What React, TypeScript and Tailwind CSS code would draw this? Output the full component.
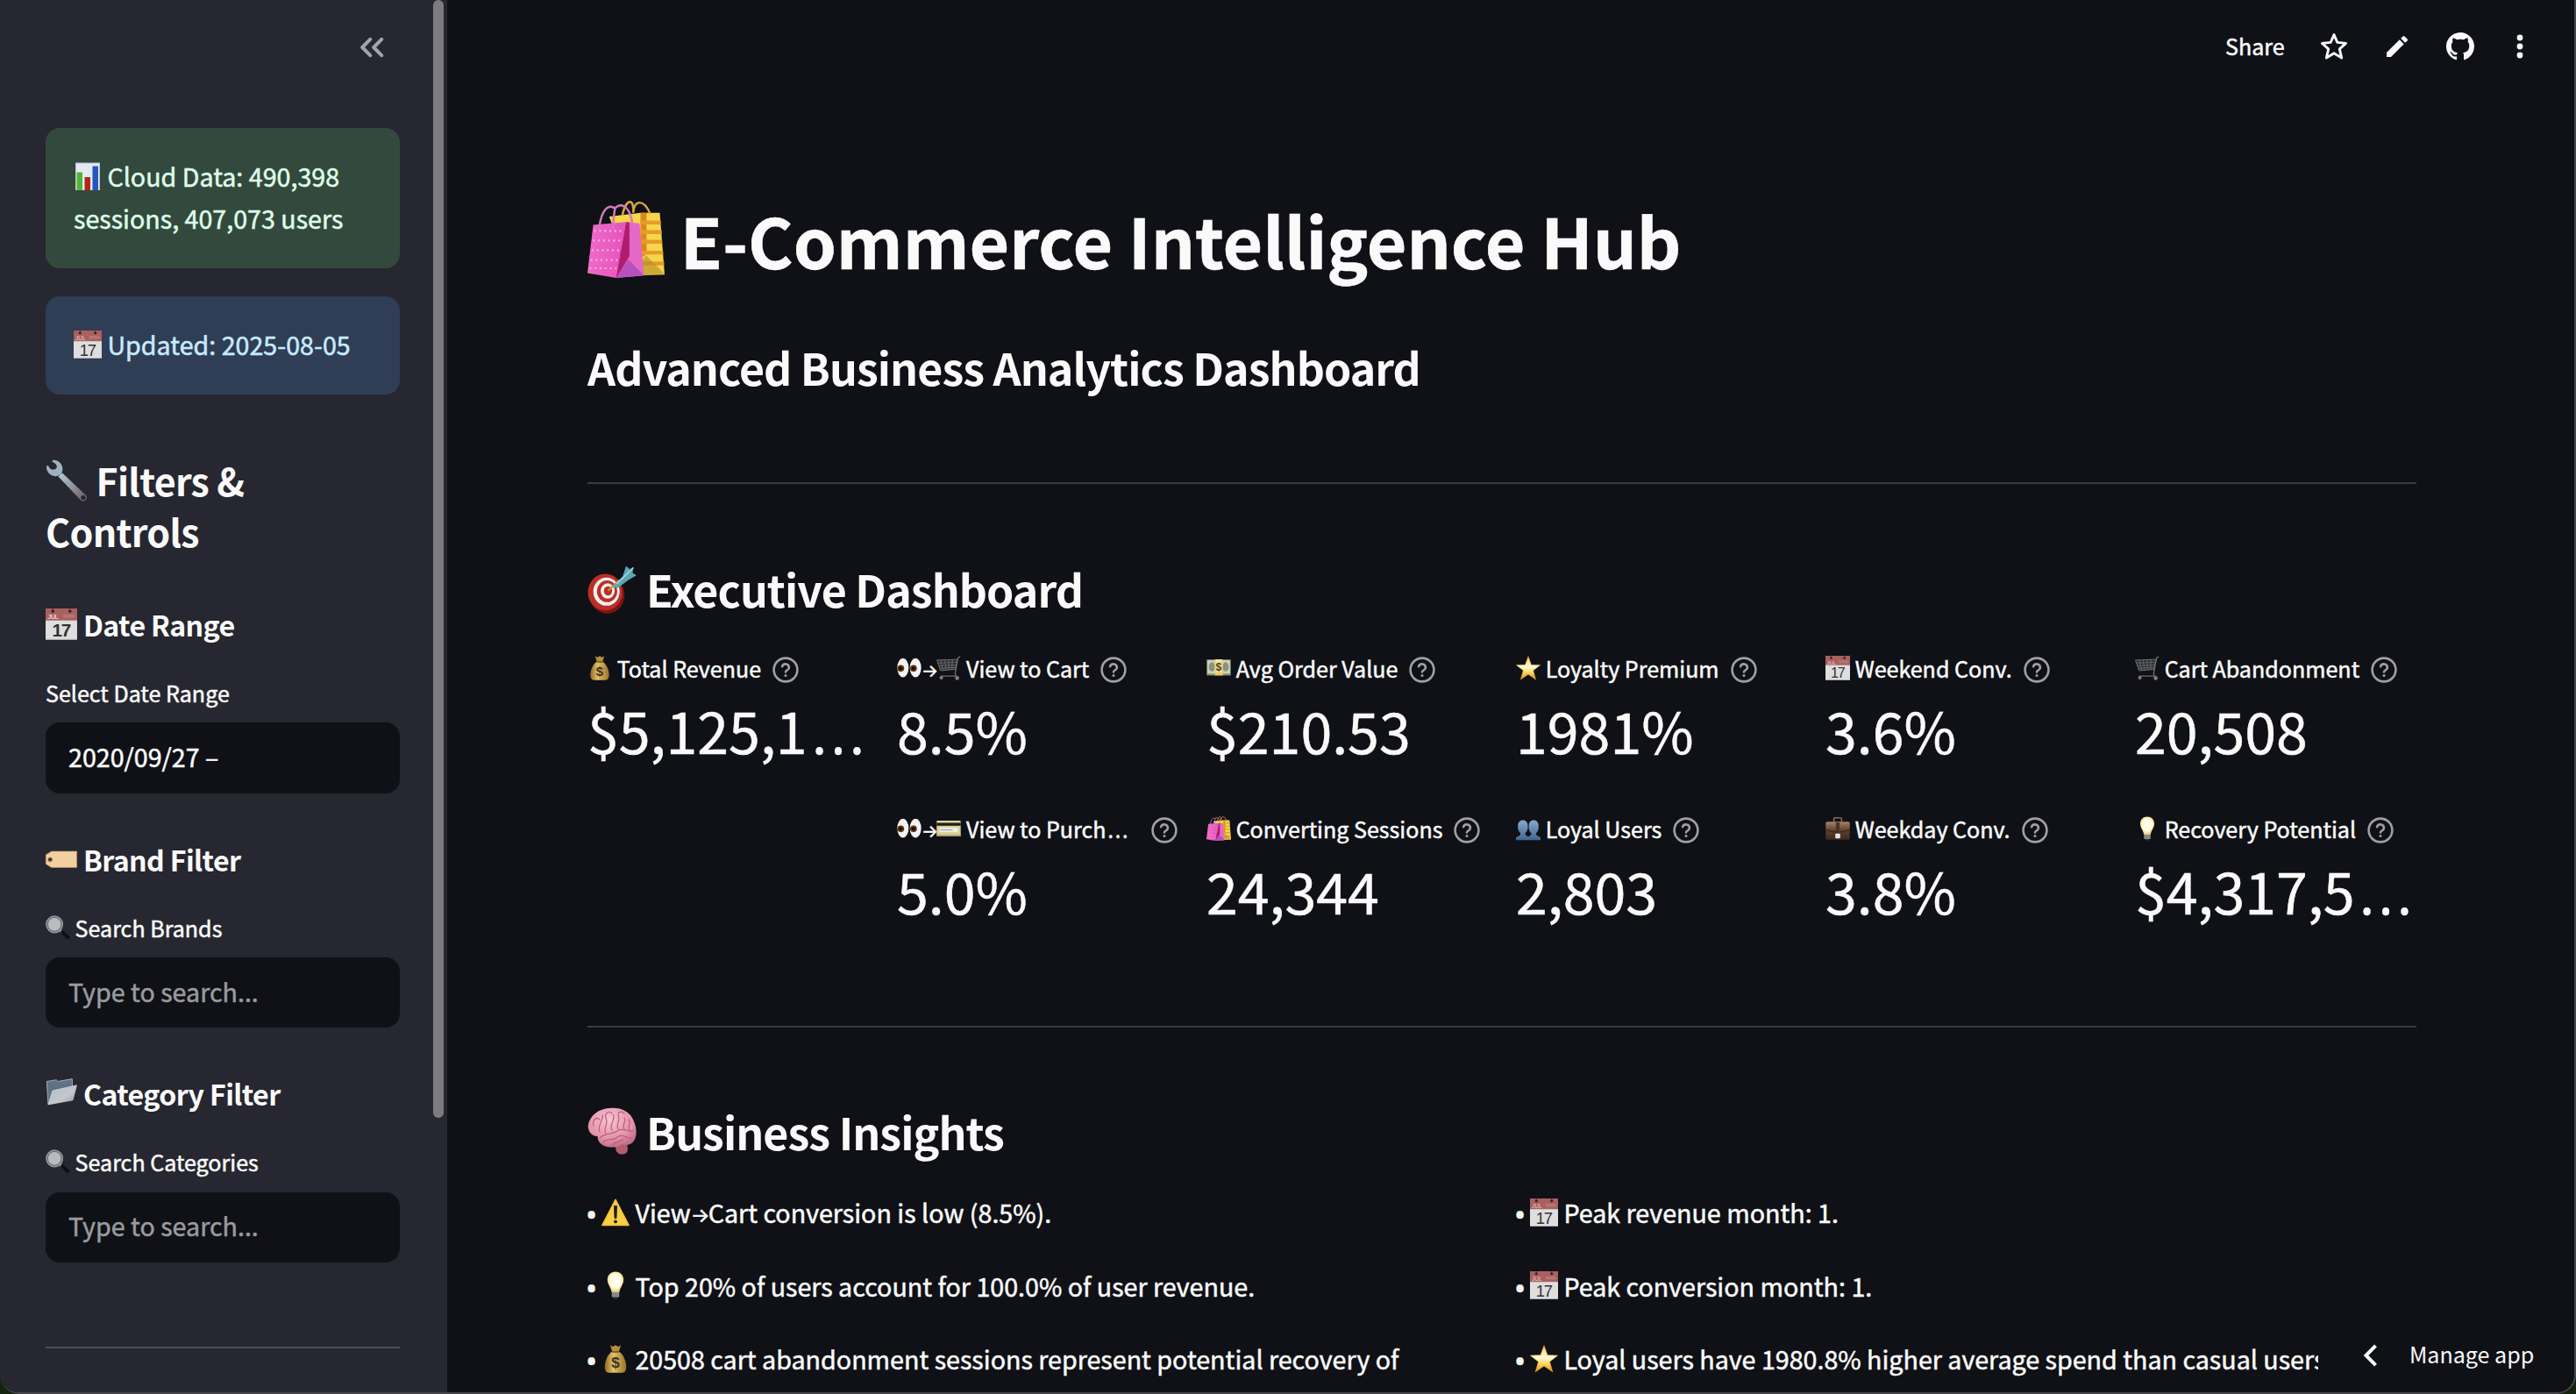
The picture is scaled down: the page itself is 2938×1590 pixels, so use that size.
import React from 'react';

type GlyphName =
  | 'chart' | 'calendar' | 'wrench' | 'tag' | 'lens' | 'folder' | 'bags' | 'target' | 'moneybag'
  | 'eyes' | 'cart' | 'cash' | 'star' | 'card' | 'people' | 'briefcase' | 'bulb' | 'brain' | 'warning';

function Gradients() {
  return (
    <svg width="0" height="0" className="absolute" aria-hidden="true">
      <defs>
        <linearGradient id="gSteel" x1="0" y1="0" x2="1" y2="1">
          <stop offset="0" stopColor="#b9cbdc" />
          <stop offset="0.5" stopColor="#8d949e" />
          <stop offset="1" stopColor="#6b5457" />
        </linearGradient>
        <linearGradient id="gGold" x1="0" y1="0" x2="1" y2="0">
          <stop offset="0" stopColor="#8f6a22" />
          <stop offset="0.4" stopColor="#e3c267" />
          <stop offset="1" stopColor="#9a7128" />
        </linearGradient>
        <linearGradient id="gStar" x1="0" y1="0" x2="0" y2="1">
          <stop offset="0" stopColor="#f7c948" />
          <stop offset="0.45" stopColor="#fffbe0" />
          <stop offset="0.65" stopColor="#fde06a" />
          <stop offset="1" stopColor="#e08a1e" />
        </linearGradient>
        <linearGradient id="gFolder" x1="0" y1="0" x2="1" y2="1">
          <stop offset="0" stopColor="#b4bec8" />
          <stop offset="0.6" stopColor="#c3c7cc" />
          <stop offset="1" stopColor="#8d9298" />
        </linearGradient>
        <linearGradient id="gPeople" x1="0" y1="0" x2="0" y2="1">
          <stop offset="0" stopColor="#86a9c9" />
          <stop offset="1" stopColor="#3f6793" />
        </linearGradient>
        <linearGradient id="gCase" x1="0" y1="0" x2="0" y2="1">
          <stop offset="0" stopColor="#a98466" />
          <stop offset="0.5" stopColor="#5d3f2f" />
          <stop offset="1" stopColor="#3d2a20" />
        </linearGradient>
        <radialGradient id="gBulb" cx="0.5" cy="0.45" r="0.55">
          <stop offset="0" stopColor="#ffffff" />
          <stop offset="0.6" stopColor="#fffbe0" />
          <stop offset="1" stopColor="#e9cf70" />
        </radialGradient>
        <radialGradient id="gBrain" cx="0.45" cy="0.3" r="0.8">
          <stop offset="0" stopColor="#f9c3d2" />
          <stop offset="0.6" stopColor="#e592ac" />
          <stop offset="1" stopColor="#b35f7c" />
        </radialGradient>
        <linearGradient id="gPink" x1="0" y1="0" x2="1" y2="0">
          <stop offset="0" stopColor="#f06ac9" />
          <stop offset="1" stopColor="#e553bb" />
        </linearGradient>
      </defs>
    </svg>
  );
}

const glyphs: Record<GlyphName, React.ReactNode> = {
  chart: (
    <>
      <rect x="2" y="0.5" width="28" height="31.5" fill="#b9c6d6" />
      <rect x="3" y="1.5" width="26" height="30" fill="#e3eaf3" />
      <rect x="3.5" y="11.5" width="6.5" height="20.5" fill="#50b537" />
      <rect x="12.5" y="17" width="6.5" height="15" fill="#b5241c" />
      <rect x="21.5" y="4.5" width="6.5" height="27.5" fill="#2657c0" />
    </>
  ),
  calendar: (
    <>
      <rect width="32" height="32" fill="#dededf" />
      <rect width="32" height="12.2" fill="#a9605f" />
      <circle cx="7.3" cy="2.8" r="1.5" fill="#2b2022" />
      <circle cx="24.7" cy="2.8" r="1.5" fill="#2b2022" />
      <path d="M7.3 0V2.5M24.7 0V2.5" stroke="#3a2b2d" strokeWidth="0.7" />
      <text x="2" y="11" fontSize="6.6" fontFamily="Liberation Sans" fill="#e8cfcf">JUL</text>
      <path d="M18 7.8H29.5" stroke="#b98080" strokeWidth="3.4" strokeDasharray="1.4 0.7" />
      <text x="15.8" y="28.9" fontSize="18.5" textAnchor="middle" fontFamily="Liberation Sans" letterSpacing="-1.2" fill="#333">17</text>
      <rect y="31" width="32" height="1" fill="#a9a9aa" />
    </>
  ),
  wrench: (
    <>
      <path d="M12.6 10.2L31 27.6A2.9 2.9 0 0 1 27 31.4L9.6 13z" fill="url(#gSteel)" />
      <path d="M5.2 0.6C9.6 -0.2 13.4 3.6 12.9 8.2C12.8 10.8 9.6 13.4 6.6 12.7C3 12.2 0.4 9 0.6 5.2L2 4.6C3 7.4 5.2 8.6 7.4 7.4C9.4 6 9 3.6 5 1.6z" fill="#9fb0c1" />
      <circle cx="28.6" cy="29" r="1.7" fill="#2a2529" />
    </>
  ),
  tag: (
    <>
      <path d="M6 5.6H31.7V28.4H6L0.3 23.5V10.5z" transform="translate(0 4) scale(1 0.72)" fill="#f2cf9f" stroke="#b99868" strokeWidth="0.7" />
      <circle cx="4.6" cy="16.4" r="2.2" fill="#3d3435" stroke="#b08c60" strokeWidth="0.8" />
    </>
  ),
  lens: (
    <>
      <path d="M18.5 19.4L28 27" stroke="#8c9298" strokeWidth="4" />
      <path d="M22 22L29 28.4" stroke="#0c1014" strokeWidth="4.8" strokeLinecap="round" />
      <ellipse cx="11.6" cy="11.8" rx="10.2" ry="10.4" fill="#babbbd" stroke="#8b99a6" strokeWidth="2.4" />
      <ellipse cx="11.6" cy="11.8" rx="8.9" ry="9.1" fill="none" stroke="#4e4a4a" strokeWidth="0.9" />
    </>
  ),
  folder: (
    <>
      <path d="M1.2 4L11 2.4L12.6 4L27 1.4L27.4 22L2.6 27z" fill="#5f7282" stroke="#a9b5bf" strokeWidth="0.8" />
      <path d="M7 13.4L31.6 7.8L27.6 23L2.6 27.6z" fill="url(#gFolder)" stroke="#d3d7db" strokeWidth="0.6" />
    </>
  ),
  bags: (
    <>
      <path d="M9 6.5L22 5H30L32 30.6L18 31z" fill="#f6d64a" />
      <path d="M22 5H24.5V22L22 24z" fill="#d98a1c" />
      <path d="M22 9H30.4M22 13H30.8M22 17H31M22 21.5H31.4M20 26H31.8" stroke="#e79c28" strokeWidth="1.6" />
      <path d="M18 30.7L24.3 22.6L32 30.4z" fill="#b58a2a" opacity="0.6" />
      <path d="M14.5 6C16 -1.2 19.5 -1.2 19 5M19 5C19.5 -0.8 23.5 -0.6 26 5.4" fill="none" stroke="#dba43e" strokeWidth="0.9" />
      <path d="M2.4 10L16 8.8L12 32L0 30z" fill="url(#gPink)" />
      <path d="M16 8.8L21.6 9.4L23.4 31L12 32z" fill="#e568c6" />
      <path d="M16 8.8L17.4 9V23L12 32z" fill="#b01c6e" />
      <path d="M12 32L17 24.4L23.4 31z" fill="#b552bd" />
      <path d="M2.8 12.5H14.5M2.3 16.5H14M1.8 20.5H13.4M1.3 24.6H12.6M0.9 28H12" stroke="#f9b3e6" strokeWidth="0.8" strokeDasharray="0.7 1.4" />
      <path d="M4.8 12C5.6 4 8.6 0.8 11.4 3.2C11 6 10.6 8 10.6 12M11.4 3C15 -0.2 18 4 18.6 9.6" fill="none" stroke="#d678bb" strokeWidth="0.9" />
    </>
  ),
  target: (
    <>
      <ellipse cx="12.8" cy="20" rx="11.4" ry="12" fill="#7c1411" />
      <ellipse cx="11.6" cy="18" rx="11.3" ry="12" fill="#bb2e25" />
      <ellipse cx="12.4" cy="17.6" rx="8.6" ry="9.2" fill="#f3eeee" />
      <ellipse cx="12.8" cy="17.4" rx="6.6" ry="7.1" fill="#bb2e25" />
      <ellipse cx="13.2" cy="17.2" rx="4.6" ry="5" fill="#f3eeee" />
      <ellipse cx="13.4" cy="17.2" rx="2.7" ry="3" fill="#bb2e25" />
      <path d="M13.4 17L21 10" stroke="#c09a32" strokeWidth="1.2" />
      <path d="M16.6 14.6L23 7.6L25.2 0.8L27.6 3L30 1.6L29.4 5.4L32 7L27 9.8L19.4 15.4z" fill="#58a7b4" />
      <path d="M19 12.6L30 2" stroke="#a5dbe2" strokeWidth="0.9" />
    </>
  ),
  moneybag: (
    <>
      <path d="M12 7.6C3.4 13.6 1.2 30.4 7 31.4C11 32 21 32 25 31.4C30.8 30.4 28.6 13.6 20 7.6z" fill="url(#gGold)" />
      <path d="M10 0.6L13 2L16 0.2L19 2L22 0.6L19.6 8H12.4z" fill="#b58e3d" />
      <path d="M12 8H20" stroke="#6d4f18" strokeWidth="1.6" />
      <text x="16" y="26.4" fontSize="17" fontWeight="700" textAnchor="middle" fontFamily="Liberation Sans" fill="#3c3224">$</text>
    </>
  ),
  eyes: (
    <>
      <ellipse cx="7.8" cy="15.6" rx="7.4" ry="12.4" fill="#f4f3f1" />
      <ellipse cx="24.2" cy="15.6" rx="7.4" ry="12.4" fill="#f4f3f1" />
      <circle cx="5" cy="16.4" r="4.4" fill="#5b3510" />
      <circle cx="21.6" cy="16.4" r="4.4" fill="#5b3510" />
      <circle cx="4.8" cy="16.4" r="2.2" fill="#120a05" />
      <circle cx="21.4" cy="16.4" r="2.2" fill="#120a05" />
    </>
  ),
  cart: (
    <>
      <path d="M31 0.8L28 3L24.4 22.6L25.4 26.4H5.6" fill="none" stroke="#6d6d70" strokeWidth="1.6" />
      <path d="M0.6 5.6L27.4 4.8L24.6 17.6L5.4 19.4z" fill="#2d2e33" stroke="#747477" strokeWidth="1.1" />
      <path d="M2 9.4L26.6 8.4M3 13L25.8 12M4.2 16.4L25 15M5.6 5.6L8.6 19M10.6 5.4L12.6 18.6M15.6 5.2L16.6 18.2M20.8 5L20.4 18" stroke="#77777a" strokeWidth="0.8" />
      <circle cx="6.4" cy="28.6" r="2.3" fill="#8b7d70" />
      <circle cx="27" cy="29" r="2.6" fill="#8b7d70" />
    </>
  ),
  cash: (
    <>
      <rect x="0.3" y="5" width="31.4" height="20.6" fill="#8f957f" />
      <rect x="1.4" y="5.6" width="29.2" height="17.4" fill="#cfd2bd" />
      <ellipse cx="7" cy="14.4" rx="4" ry="6" fill="#8a9180" />
      <ellipse cx="25" cy="14.4" rx="4" ry="6" fill="#8a9180" />
      <rect x="10.8" y="4.6" width="10.6" height="21" fill="#f0c85c" />
      <rect x="12" y="4.6" width="8" height="17.4" fill="#f5e3a4" />
      <text x="16" y="19.8" fontSize="14" fontWeight="700" textAnchor="middle" fontFamily="Liberation Sans" fill="#4c431c">$</text>
    </>
  ),
  star: <path d="M16 0.6L20 11.6L31.8 12L22.6 19.2L26 31L16 24.2L6 31L9.4 19.2L0.2 12L12 11.6z" fill="url(#gStar)" stroke="#dd9a2b" strokeWidth="0.5" />,
  card: (
    <>
      <rect x="0.3" y="5.6" width="31.4" height="20.6" rx="1" fill="#d9d29a" />
      <rect x="0.3" y="8.6" width="31.4" height="3.8" fill="#20201a" />
      <rect x="4" y="15" width="24" height="5.4" fill="#f1efe0" />
      <path d="M5 17.8H21" stroke="#8aa0c6" strokeWidth="1.2" />
      <rect x="0.3" y="24.2" width="31.4" height="2" fill="#a8a06c" />
    </>
  ),
  people: (
    <>
      <path d="M0 31V27.6C4 25.6 6 25 6 22.4C2.8 19.6 2 15 2.6 11C3.2 6.8 6 5 9 5C12 5 14.8 6.8 15.4 11C16 15 15 19.6 12 22.4C12 25 14 25.6 17 27V31z" fill="url(#gPeople)" />
      <path d="M15 31V27C18 25.6 20 25 20 22.4C17 19.6 16.2 15 16.8 11C17.4 6.8 20 5 23 5C26 5 28.8 6.8 29.4 11C30 15 29.2 19.6 26 22.4C26 25 28 25.6 32 27.6V31z" fill="url(#gPeople)" />
    </>
  ),
  briefcase: (
    <>
      <path d="M11 7V3.4C11 2.4 12 2 13 2H19C20 2 21 2.4 21 3.4V7" fill="none" stroke="#8a6a52" strokeWidth="1.8" />
      <rect x="0.3" y="7" width="31.4" height="23.6" rx="2" fill="url(#gCase)" />
      <path d="M0.3 17C8 22 24 22 31.7 17" fill="none" stroke="#2e1e16" strokeWidth="1" />
      <rect x="13.6" y="8" width="4.8" height="13" fill="#4c3326" />
      <rect x="12.8" y="22.6" width="6.4" height="6.2" rx="1" fill="#e6e6e6" />
    </>
  ),
  bulb: (
    <>
      <path d="M16 0.6C21.6 0.6 25.2 4.6 25.2 9.8C25.2 15 21 18.6 20.4 24H11.6C11 18.6 6.8 15 6.8 9.8C6.8 4.6 10.4 0.6 16 0.6z" fill="url(#gBulb)" />
      <rect x="11.8" y="23.6" width="8.4" height="6" rx="1" fill="#9a9a98" />
      <path d="M11.8 25.6H20.2M11.8 27.6H20.2" stroke="#6a6a68" strokeWidth="0.7" />
      <rect x="13.6" y="29.4" width="4.8" height="2" rx="1" fill="#3b3b3b" />
    </>
  ),
  brain: (
    <>
      <path d="M18.6 24C17.6 29 20 31.4 24 30.4C27 29.6 26.4 26.4 25.6 23z" fill="#b55d6f" />
      <path d="M16 0.4C23 0 28.6 3.6 30.4 9.6C32.6 14.4 32.4 21 28.6 23.6C25.6 25.6 23 23.6 21.6 24.6C19.6 26.8 12.6 26.4 9.6 24.4C6.6 22.6 6.8 20 6.6 18.8C3 19 0.4 16 0.4 12C1.4 5 8 0.4 16 0.4z" fill="url(#gBrain)" />
      <path d="M4 12C3 8 6 6 8 8M8 16C6 12 10 10 10 5M12 17C10 13 14 11 12 7C11 4 14 2 16 4M16 15C14 11 18 9 17 5M20 14C18 11 22 9 20 5C20 3 22 2 24 4M24 14C22 11 26 9 24 7M28 16C25 13 29 12 27 8M8 20C12 16 17 18 20 15C24 13 28 17 30 15M10 23C14 19 16 23 20 19C24 17 26 21 29 20M16 25C18 22 21 23 23 21" fill="none" stroke="#b9617f" strokeWidth="0.7" strokeLinecap="round" />
    </>
  ),
  warning: (
    <>
      <path d="M16 1.4L31 30.4H1z" fill="#f9cf45" stroke="#f5c33a" strokeWidth="1.6" strokeLinejoin="round" />
      <path d="M14.4 8.4H17.6L17 22.6H15z" fill="#1f1a10" stroke="#1f1a10" strokeWidth="0.8" strokeLinejoin="round" />
      <circle cx="16" cy="26.4" r="1.9" fill="#1f1a10" />
    </>
  ),
};

function Glyph({ name }: { name: GlyphName }) {
  return (
    <svg viewBox="0 0 32 32" className="inline-block h-[1.117em] w-[1.117em] overflow-visible align-[-0.131em] [-webkit-text-stroke:0px]">
      {glyphs[name]}
    </svg>
  );
}

function HeadingGlyph({ name }: { name: GlyphName }) {
  return (
    <span className="mr-[0.012em]">
      <Glyph name={name} />
    </span>
  );
}

function Arrow() {
  return <span className="inline-block w-[0.87em] text-center align-[0.06em] font-['Inter'] text-[0.8em] leading-none -tracking-[0.08em]">→</span>;
}

function HelpIcon() {
  return (
    <svg viewBox="0 0 32 32" className="mt-1 size-8 shrink-0" fill="none" stroke="#a0a0a4" strokeWidth="2.6" strokeLinecap="round" strokeLinejoin="round">
      <circle cx="16" cy="16" r="13.4" />
      <path d="M12.1 12.2a4 4 0 0 1 7.8 1.3c0 2.6-3.9 3.3-3.9 5" />
      <path d="M16 22.4h0.01" strokeWidth="3" />
    </svg>
  );
}

type MetricData = { icon: React.ReactNode; label: string; value: string; cut?: boolean; labelCut?: boolean };

function Ellipsis({ className }: { className: string }) {
  return <span className={className}>…</span>;
}

function Metric({ icon, label, value, cut, labelCut }: MetricData) {
  return (
    <div className="h-[132px]">
      <div className={labelCut ? 'flex h-10 items-center justify-between' : 'flex h-10 items-center gap-3'}>
        <span className="text-[25.07px] leading-[40px]">
          {icon} {label}
          {labelCut && <Ellipsis className="ml-px font-['Noto_Sans'] text-[34px] leading-[0px] font-light" />}
        </span>
        <HelpIcon />
      </div>
      <div className="mt-2 text-[64.5px] leading-[84px]">
        {value}
        {cut && <Ellipsis className="ml-[3px] font-['Noto_Sans'] text-[88px] leading-[0px] font-light" />}
      </div>
    </div>
  );
}

const columns: (MetricData | null)[][] = [
  [{ icon: <Glyph name="moneybag" />, label: 'Total Revenue', value: '$5,125,1', cut: true }, null],
  [
    { icon: <><Glyph name="eyes" /><Arrow /><Glyph name="cart" /></>, label: 'View to Cart', value: '8.5%' },
    { icon: <><Glyph name="eyes" /><Arrow /><Glyph name="card" /></>, label: 'View to Purch', value: '5.0%', labelCut: true },
  ],
  [
    { icon: <Glyph name="cash" />, label: 'Avg Order Value', value: '$210.53' },
    { icon: <Glyph name="bags" />, label: 'Converting Sessions', value: '24,344' },
  ],
  [
    { icon: <Glyph name="star" />, label: 'Loyalty Premium', value: '1981%' },
    { icon: <Glyph name="people" />, label: 'Loyal Users', value: '2,803' },
  ],
  [
    { icon: <Glyph name="calendar" />, label: 'Weekend Conv.', value: '3.6%' },
    { icon: <Glyph name="briefcase" />, label: 'Weekday Conv.', value: '3.8%' },
  ],
  [
    { icon: <Glyph name="cart" />, label: 'Cart Abandonment', value: '20,508' },
    { icon: <Glyph name="bulb" />, label: 'Recovery Potential', value: '$4,317,5', cut: true },
  ],
];

function Insight({ icon, children }: { icon: GlyphName; children: React.ReactNode }) {
  return (
    <p className="mb-[32.5px]">
      <span className="inline-flex h-[21px] w-4 items-center align-[-3px]">
        <span className="-ml-[2px] inline-block font-['Noto_Sans'] text-[35px] leading-[12px]">•</span>
      </span>
      <Glyph name={icon} /> {children}
    </p>
  );
}

function Sidebar() {
  return (
    <aside className="flex h-full w-[510px] shrink-0 justify-between bg-[#262730] pr-1 pl-[52px]">
      <div className="flex w-[404px] flex-col">
        <div className="flex h-[146px] justify-end pt-[42px] pr-[18px]">
          <svg viewBox="0 0 28 24" className="h-6 w-7" fill="none" stroke="#a3a4a8" strokeWidth="4" strokeLinecap="round" strokeLinejoin="round">
            <path d="M12.2 2.8L3.2 12L12.2 21.2M25.2 2.8L16.2 12L25.2 21.2" />
          </svg>
        </div>
        <div className="h-40 rounded-2xl bg-[#33493d] px-8 pt-[31px] text-[28.65px] leading-[48px] text-[#dffde9]">
          <Glyph name="chart" /> Cloud Data: 490,398
          <br />
          sessions, 407,073 users
        </div>
        <div className="mt-8 h-28 rounded-2xl bg-[#2f3d55] px-8 pt-[31px] text-[28.65px] leading-[48px] text-[#c7ebff]">
          <Glyph name="calendar" /> Updated: 2025-08-05
        </div>
        <h2 className="mt-[68px] text-[43px] leading-[58px] font-semibold tracking-[-0.017em] [-webkit-text-stroke:0px]">
          <HeadingGlyph name="wrench" /> Filters &amp;
          <br />
          Controls
        </h2>
        <h3 className="mt-14 text-[32.2px] leading-[44px] font-semibold tracking-[-0.02em] [-webkit-text-stroke:0px]">
          <HeadingGlyph name="calendar" /> Date Range
        </h3>
        <label className="mt-9 text-[25.07px] leading-[40px]">Select Date Range</label>
        <div className="mt-[14px] h-[81px] rounded-2xl bg-[#0f1116] px-[26px] pt-[15px] text-[28.65px] leading-[48px]">2020/09/27 –</div>
        <h3 className="mt-[53px] text-[32.2px] leading-[44px] font-semibold tracking-[-0.02em] [-webkit-text-stroke:0px]">
          <HeadingGlyph name="tag" /> Brand Filter
        </h3>
        <label className="mt-9 text-[25.07px] leading-[40px]">
          <Glyph name="lens" /> Search Brands
        </label>
        <div className="mt-[14px] h-20 rounded-2xl bg-[#0f1116] px-[26px] pt-[15px] text-[28.65px] leading-[48px] text-[#9a9b9e]">Type to search...</div>
        <h3 className="mt-[53px] text-[32.2px] leading-[44px] font-semibold tracking-[-0.02em] [-webkit-text-stroke:0px]">
          <HeadingGlyph name="folder" /> Category Filter
        </h3>
        <label className="mt-9 text-[25.07px] leading-[40px]">
          <Glyph name="lens" /> Search Categories
        </label>
        <div className="mt-[15px] h-20 rounded-2xl bg-[#0f1116] px-[26px] pt-[14px] text-[28.65px] leading-[48px] text-[#9a9b9e]">Type to search...</div>
        <div className="mt-24 h-0.5 shrink-0 bg-[#4c4d56]" />
      </div>
      <div className="h-[1275px] w-3 rounded-full bg-[#7c7c80]" />
    </aside>
  );
}

function Toolbar() {
  return (
    <div className="flex h-[106px] items-center pl-[1868px] text-[#fafafa]">
      <span className="w-[108px] pb-[2px] text-[25.07px] leading-[40px]">Share</span>
      <svg viewBox="0 0 32 32" className="size-8" fill="none" stroke="#fafafa" strokeWidth="2.9" strokeLinejoin="round">
        <path d="M16 2.6L19.8 11.4L29.6 12.4L22.3 18.8L24.7 29L16 23.8L7.3 29L9.7 18.8L2.4 12.4L12.2 11.4z" />
      </svg>
      <svg viewBox="0 0 24 24" className="ml-[40px] size-8" fill="#fafafa">
        <path d="M3 17.25V21h3.75L17.81 9.94l-3.75-3.75L3 17.25zM20.71 7.04a.996.996 0 0 0 0-1.41l-2.34-2.34a.996.996 0 0 0-1.41 0l-1.83 1.83 3.75 3.75 1.83-1.83z" />
      </svg>
      <svg viewBox="0 0 16 16" className="ml-10 size-8" fill="#fafafa">
        <path d="M8 0C3.58 0 0 3.58 0 8c0 3.54 2.29 6.53 5.47 7.59.4.07.55-.17.55-.38 0-.19-.01-.82-.01-1.49-2.01.37-2.53-.49-2.69-.94-.09-.23-.48-.94-.82-1.13-.28-.15-.68-.52-.01-.53.63-.01 1.08.58 1.23.82.72 1.21 1.87.87 2.33.66.07-.52.28-.87.51-1.07-1.78-.2-3.64-.89-3.64-3.95 0-.87.31-1.59.82-2.15-.08-.2-.36-1.02.08-2.12 0 0 .67-.21 2.2.82.64-.18 1.32-.27 2-.27s1.36.09 2 .27c1.53-1.04 2.2-.82 2.2-.82.44 1.1.16 1.92.08 2.12.51.56.82 1.27.82 2.15 0 3.07-1.87 3.75-3.65 3.95.29.25.54.73.54 1.48 0 1.07-.01 1.93-.01 2.2 0 .21.15.46.55.38A8.01 8.01 0 0 0 16 8c0-4.42-3.58-8-8-8z" />
      </svg>
      <svg viewBox="0 0 8 28" className="ml-[48px] h-7 w-2" fill="#fafafa">
        <circle cx="4" cy="4" r="3.4" />
        <circle cx="4" cy="14" r="3.4" />
        <circle cx="4" cy="24" r="3.4" />
      </svg>
    </div>
  );
}

export default function App() {
  return (
    <div className="h-[1590px] w-[2938px] overflow-hidden bg-[#14240f]">
      <Gradients />
      <div className="relative flex h-full w-full overflow-hidden rounded-b-[22px] border-r-2 border-b-2 border-[#47474b] bg-[#0f1116] font-['Noto_Sans_CJK_SC',sans-serif] whitespace-nowrap text-[#fafafa] [-webkit-text-stroke:0.5px] [font-kerning:normal]">
        <Sidebar />
        <main className="min-w-0 flex-1 pl-[160px]">
          <Toolbar />
          <h1 className="mt-[117px] text-[78.8px] leading-[100px] font-bold tracking-[-0.0018em]">
            <Glyph name="bags" /> E-Commerce Intelligence Hub
          </h1>
          <h2 className="mt-[61px] text-[50.1px] leading-[68px] font-semibold tracking-[-0.019em] [-webkit-text-stroke:0px]">
            Advanced Business Analytics Dashboard
          </h2>
          <div className="mt-[98px] h-0.5 w-[2086px] bg-[#3a3c42]" />
          <h2 className="mt-[85px] text-[50.1px] leading-[68px] font-semibold tracking-[-0.019em] [-webkit-text-stroke:0px]">
            <HeadingGlyph name="target" /> Executive Dashboard
          </h2>
          <div className="mt-[37px] grid w-[2086px] grid-cols-6 gap-8">
            {columns.map((col, i) => (
              <div key={i} className="flex min-w-0 flex-col gap-[51px]">
                {col.map((m, j) => (m ? <Metric key={j} {...m} /> : <div key={j} className="h-[132px]" />))}
              </div>
            ))}
          </div>
          <div className="mt-[113px] h-0.5 w-[2086px] bg-[#3a3c42]" />
          <h2 className="mt-[84px] text-[50.1px] leading-[68px] font-semibold tracking-[-0.019em] [-webkit-text-stroke:0px]">
            <HeadingGlyph name="brain" /> Business Insights
          </h2>
          <div className="mt-[33px] grid w-[2086px] grid-cols-2 gap-8 text-[28.65px] leading-[51px]">
            <div>
              <Insight icon="warning">View<Arrow />Cart conversion is low (8.5%).</Insight>
              <Insight icon="bulb">Top 20% of users account for 100.0% of user revenue.</Insight>
              <Insight icon="moneybag">
                20508 cart abandonment sessions represent potential recovery of
                <br />
                $4,317,545.24.
              </Insight>
            </div>
            <div>
              <Insight icon="calendar">Peak revenue month: 1.</Insight>
              <Insight icon="calendar">Peak conversion month: 1.</Insight>
              <Insight icon="star">Loyal users have 1980.8% higher average spend than casual users.</Insight>
            </div>
          </div>
        </main>
        <div className="absolute right-0 bottom-0 flex h-[84px] w-[292px] items-center bg-[#0f1116] pl-[50px]">
          <svg viewBox="0 0 18 26" className="h-[26px] w-[18px]" fill="none" stroke="#fafafa" strokeWidth="4">
            <path d="M15.5 1.8L4.5 13L15.5 24.2" />
          </svg>
          <span className="ml-[36px] pb-[4px] text-[25.07px] leading-[40px] [-webkit-text-stroke:0px]">Manage app</span>
        </div>
      </div>
    </div>
  );
}
